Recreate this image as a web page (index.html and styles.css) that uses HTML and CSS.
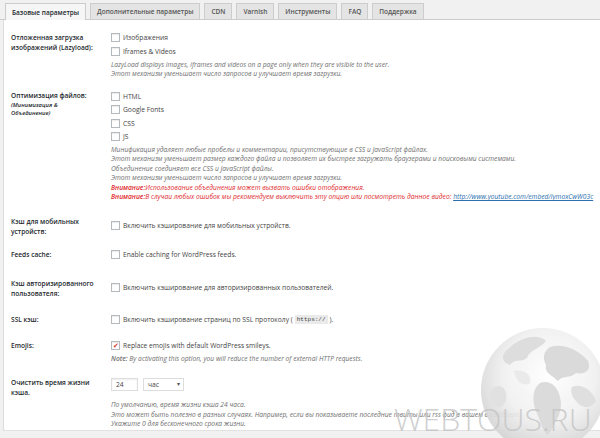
FILE: index.html
```html
<!DOCTYPE html>
<html lang="ru">
<head>
    <meta charset="UTF-8">
    <title>Базовые параметры</title>
    <link rel="stylesheet" href="styles.css">
</head>
<body>

    <!-- Вкладки -->
    <div class="tabs">
        <span class="tab tab-active">Базовые параметры</span>
        <span class="tab">Дополнительные параметры</span>
        <span class="tab">CDN</span>
        <span class="tab">Varnish</span>
        <span class="tab">Инструменты</span>
        <span class="tab">FAQ</span>
        <span class="tab">Поддержка</span>
    </div>

    <div class="panel">

        <div class="row row-lazy">
            <div class="label">Отложенная загрузка изображений (Lazyload):</div>
            <div class="field">
                <div class="opt"><span class="box"></span>Изображения</div>
                <div class="opt"><span class="box"></span>Iframes &amp; Videos</div>
                <p class="desc">LazyLoad displays images, iframes and videos on a page only when they are visible to the user.<br>Этот механизм уменьшает число запросов и улучшает время загрузки.</p>
            </div>
        </div>

        <div class="row row-files">
            <div class="label">Оптимизация файлов:<span class="sub">(Минимизация &amp; Объединение)</span></div>
            <div class="field">
                <div class="opt"><span class="box"></span>HTML</div>
                <div class="opt"><span class="box"></span>Google Fonts</div>
                <div class="opt"><span class="box"></span>CSS</div>
                <div class="opt"><span class="box"></span>JS</div>
                <p class="desc">Минификация удаляет любые пробелы и комментарии, присутствующие в CSS и JavaScript файлах.<br>Этот механизм уменьшает размер каждого файла и позволяет их быстрее загружать браузерами и поисковыми системами.<br>Объединение соединяет все CSS и JavaScript файлы.<br>Этот механизм уменьшает число запросов и улучшает время загрузки.</p>
                <p class="desc warn"><b>Внимание:</b>Использование объединения может вызвать ошибки отображения.<br><b>Внимание:</b>В случаи любых ошибок мы рекомендуем выключить эту опцию или посмотреть данное видео: <a href="#">http://www.youtube.com/embed/iymoxCwW03c</a></p>
            </div>
        </div>

        <div class="row row-mobile">
            <div class="label">Кэш для мобильных устройств:</div>
            <div class="field">
                <div class="opt"><span class="box"></span>Включить кэширование для мобильных устройств.</div>
            </div>
        </div>

        <div class="row row-feeds">
            <div class="label">Feeds cache:</div>
            <div class="field">
                <div class="opt"><span class="box"></span>Enable caching for WordPress feeds.</div>
            </div>
        </div>

        <div class="row row-auth">
            <div class="label">Кэш авторизированного пользователя:</div>
            <div class="field">
                <div class="opt"><span class="box"></span>Включить кэширование для авторизированных пользователей.</div>
            </div>
        </div>

        <div class="row row-ssl">
            <div class="label">SSL кэш:</div>
            <div class="field">
                <div class="opt"><span class="box"></span>Включить кэширование страниц по SSL протоколу (<code>https://</code>).</div>
            </div>
        </div>

        <div class="row row-emoji">
            <div class="label">Emojis:</div>
            <div class="field">
                <div class="opt"><span class="box checked">&#10004;</span>Replace emojis with default WordPress smileys.</div>
                <p class="desc"><b>Note:</b> By activating this option, you will reduce the number of external HTTP requests.</p>
            </div>
        </div>

        <div class="row row-purge">
            <div class="label">Очистить время жизни кэша.</div>
            <div class="field">
                <div class="controls">
                    <span class="input">24</span>
                    <span class="select">час<span class="arrow">&#9662;</span></span>
                </div>
                <p class="desc">По умолчанию, время жизни кэша 24 часа.<br>Это может быть полезно в разных случаях. Например, если вы показываете последние твиты или rss фид в вашем в сайдбаре.<br>Укажите 0 для бесконечного срока жизни.</p>
            </div>
        </div>

    </div>

    <!-- Водяной знак поверх скриншота -->
    <div class="watermark">
        <svg class="globe" viewBox="0 0 126 126" width="126" height="126">
            <defs>
                <radialGradient id="g" cx="55%" cy="38%" r="62%">
                    <stop offset="0" stop-color="#ffffff"/>
                    <stop offset="0.6" stop-color="#f0f0f0"/>
                    <stop offset="1" stop-color="#d4d4d4"/>
                </radialGradient>
            </defs>
            <circle cx="63" cy="63" r="62" fill="url(#g)"/>
            <path d="M28 22 C40 10 58 6 66 14 C60 22 50 22 47 31 C41 36 34 31 30 38 C22 36 20 28 28 22 Z" fill="#dadada"/>
            <path d="M70 20 C82 16 98 22 108 34 C112 44 104 48 96 46 C90 52 82 48 78 54 C72 48 64 46 66 38 C62 30 64 24 70 20 Z" fill="#d6d6d6"/>
            <path d="M60 56 C70 52 78 60 80 70 C84 82 76 96 68 108 C62 104 60 92 56 84 C52 74 52 62 60 56 Z" fill="#d8d8d8"/>
            <path d="M92 60 C100 56 112 62 116 74 C110 84 100 80 96 74 C92 70 90 64 92 60 Z" fill="#dcdcdc"/>
            <path d="M14 60 C22 56 28 64 26 72 C24 80 18 84 12 76 C10 70 10 64 14 60 Z" fill="#dedede"/>
            <path d="M34 44 C44 42 52 48 50 56 C44 60 36 56 34 44 Z" fill="#e8e8e8"/>
        </svg>
        <span class="wm-text">WEBTOUS.RU</span>
    </div>

</body>
</html>
```

FILE: styles.css
```css
/* Общие */
body {
    position: relative;
    margin: 0;
    padding: 0;
    background: #f1f1f1;
    font-family: "Open Sans", Arial, sans-serif;
    color: #444;
    font-size: 6.7px;
    height: 438px;
    overflow: hidden;
}

/* Вкладки */
.tabs {
    display: flex;
    gap: 4px;
    padding: 3px 0 0 5px;
    height: 16px;
    border-bottom: 1px solid #ccc;
}

.tab {
    display: flex;
    align-items: center;
    padding: 0 6px;
    background: #e4e4e4;
    border: 1px solid #ccc;
    border-bottom: none;
    color: #555;
    font-weight: 600;
    font-size: 6.5px;
}

.tab-active {
    background: #f6f6f6;
    color: #23282d;
    margin-bottom: -1px;
}

/* Панель */
.panel {
    background: #fff;
    margin-left: 3px;
    border-left: 1px solid #ddd;
    border-bottom: 1px solid #e2e2e2;
    height: 411px;
    padding: 10px 0 0 7px;
    box-sizing: border-box;
    overflow: hidden;
}

.row {
    display: grid;
    grid-template-columns: 100px 1fr;
}

.label {
    font-weight: 600;
    font-size: 6.6px;
    color: #23282d;
    line-height: 10px;
    padding-top: 3px;
    padding-right: 8px;
}

.sub {
    display: block;
    max-width: 62px;
    font-style: italic;
    font-size: 5.8px;
    line-height: 7.5px;
    margin-top: 1px;
}

.field {
    padding-top: 1px;
}

.opt {
    display: flex;
    align-items: center;
    height: 13.5px;
    color: #444;
}

.box {
    display: inline-flex;
    align-items: center;
    justify-content: center;
    width: 7px;
    height: 7px;
    border: 1px solid #b4b9be;
    background: #fff;
    box-shadow: inset 0 1px 1px rgba(0, 0, 0, 0.08);
    margin-right: 3px;
    flex: none;
}

.checked {
    color: #d43b30;
    font-size: 7px;
    line-height: 7px;
}

.desc {
    margin: 1.5px 0 0 0;
    font-style: italic;
    font-size: 6.7px;
    line-height: 9.5px;
    color: #6f6f6f;
}

.desc b {
    font-weight: 600;
}

.warn {
    margin-top: 0;
    color: #e0282d;
}

.warn a {
    color: #2a6fb0;
}

code {
    font-family: "Liberation Mono", monospace;
    font-size: 6px;
    background: #eaeaea;
    padding: 1px 2px;
    margin: 0 2px;
}

/* Отступы строк */
.row-files {
    margin-top: 9.75px;
}

.row-mobile {
    margin-top: 12.25px;
}

.row-mobile .field,
.row-auth .field {
    padding-top: 4.25px;
}

.row-feeds {
    margin-top: 10px;
}

.row-auth {
    margin-top: 14.5px;
}

.row-ssl {
    margin-top: 13px;
}

.row-emoji {
    margin-top: 11.5px;
}

.row-purge {
    margin-top: 11.5px;
}

.row-purge .field {
    padding-top: 3px;
}

.controls {
    display: flex;
    gap: 5px;
}

.input {
    width: 21px;
    height: 11px;
    border: 1px solid #ddd;
    padding-left: 4px;
    line-height: 11px;
    box-shadow: inset 0 1px 2px rgba(0, 0, 0, 0.07);
}

.select {
    display: flex;
    justify-content: space-between;
    width: 32px;
    height: 11px;
    border: 1px solid #ddd;
    padding: 0 3px 0 4px;
    line-height: 11px;
}

.arrow {
    font-size: 6px;
    color: #555;
}

.row-purge .desc {
    margin-top: 9.25px;
}

/* Водяной знак */
.watermark {
    position: absolute;
    left: 0;
    top: 0;
    width: 600px;
    height: 438px;
    pointer-events: none;
}

.globe {
    position: absolute;
    left: 480px;
    top: 327px;
    opacity: 0.9;
}

.wm-text {
    position: absolute;
    left: 394px;
    top: 401px;
    font-family: "Open Sans", sans-serif;
    font-weight: 300;
    font-size: 32px;
    line-height: 36px;
    color: rgba(195, 195, 195, 0.8);
}
```
